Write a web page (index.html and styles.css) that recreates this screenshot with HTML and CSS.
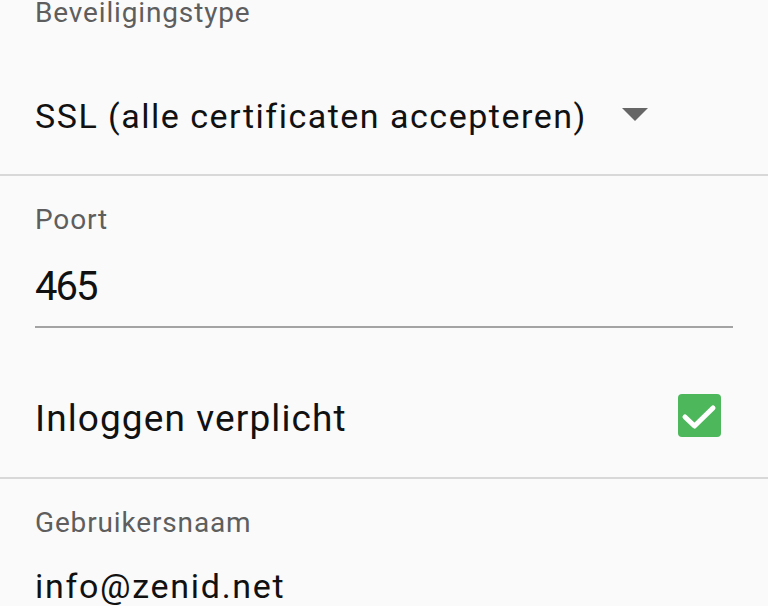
FILE: index.html
```html
<!DOCTYPE html>
<html lang="nl">
<head>
<meta charset="utf-8">
<title>Instellingen uitgaande server</title>
<link rel="stylesheet" href="styles.css">
</head>
<body>
<main class="form">
  <section class="field field-spinner">
    <div class="label">Beveiligingstype</div>
    <div class="spinner">
      <span class="spinner-value">SSL (alle certificaten accepteren)</span>
      <span class="spinner-arrow"></span>
    </div>
  </section>
  <hr class="divider">
  <section class="field field-edit">
    <div class="label">Poort</div>
    <div class="edit-value">465</div>
    <div class="edit-line"></div>
  </section>
  <section class="check-row">
    <span class="check-label">Inloggen verplicht</span>
    <svg class="checkbox" width="43" height="43" viewBox="0 0 43 43" aria-hidden="true">
      <rect x="0" y="0" width="43" height="43" rx="4" fill="#4cb85b"/>
      <path d="M7 23 L16.5 32 L35 14" fill="none" stroke="#fff" stroke-width="5" stroke-linecap="round" stroke-linejoin="round"/>
    </svg>
  </section>
  <hr class="divider">
  <section class="field field-user">
    <div class="label label-user">Gebruikersnaam</div>
    <div class="user-value">info@zenid.net</div>
  </section>
</main>
</body>
</html>
```
FILE: styles.css
```css
html, body {
  margin: 0;
  padding: 0;
  background: #fafafa;
  overflow: hidden;
}
body {
  font-family: Roboto, "Noto Sans", sans-serif;
  color: #111;
}
.form {
  display: flex;
  flex-direction: column;
}
.field {
  padding-left: 35px;
}
.label {
  font-size: 28px;
  line-height: 32px;
  letter-spacing: 0.85px;
  color: #5e5e5e;
}
.field-spinner .label {
  line-height: 26px;
}
.spinner {
  display: flex;
  align-items: center;
  margin-top: 70px;
  padding-bottom: 38px;
  height: 40px;
}
.spinner-value {
  font-size: 34px;
  line-height: 40px;
  letter-spacing: 1.5px;
}
.spinner-arrow {
  width: 0;
  height: 0;
  margin-left: 35px;
  border-left: 13px solid transparent;
  border-right: 13px solid transparent;
  border-top: 13px solid #666;
  margin-top: -4px;
}
.divider {
  margin: 0;
  border: 0;
  height: 2px;
  background: #d8d8d8;
}
.field-edit .label {
  margin-top: 28px;
}
.edit-value {
  font-size: 40px;
  line-height: 44px;
  letter-spacing: -2px;
  margin-top: 29px;
}
.edit-line {
  margin-top: 17px;
  width: 698px;
  height: 2px;
  background: #a3a3a3;
}
.check-row {
  display: flex;
  justify-content: space-between;
  align-items: flex-start;
  padding-left: 35px;
  padding-right: 47px;
  margin-top: 66px;
  padding-bottom: 36px;
}
.check-label {
  font-size: 37px;
  line-height: 44px;
  letter-spacing: 1.1px;
  margin-top: 3px;
}
.checkbox {
  display: block;
  flex: none;
}
.label-user {
  margin-top: 28px;
}
.user-value {
  font-size: 34px;
  line-height: 40px;
  letter-spacing: 1.7px;
  margin-top: 27px;
}
```
